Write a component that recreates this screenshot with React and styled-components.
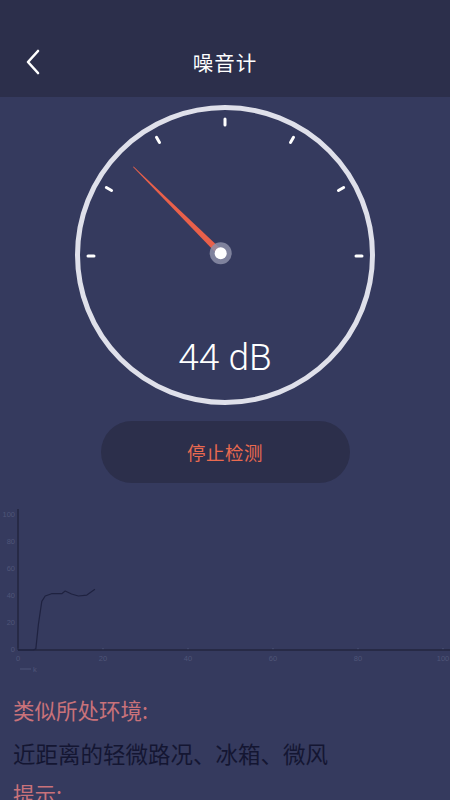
import styled, { createGlobalStyle } from "styled-components";

const GlobalStyle = createGlobalStyle`
  html, body {
    margin: 0;
    padding: 0;
    background: #353a5e;
  }
  body {
    font-family: "Noto Sans CJK SC", "Noto Sans", sans-serif;
  }
`;

const Screen = styled.div`
  width: 450px;
  height: 800px;
  overflow: hidden;
  background: #353a5e;
  display: flex;
  flex-direction: column;
`;

const Header = styled.header`
  height: 97px;
  flex-shrink: 0;
  background: #2c2f4b;
  display: grid;
  grid-template-columns: 60px 1fr 60px;
  align-items: end;
  padding-bottom: 20px;
  box-sizing: border-box;
`;

const BackButton = styled.div`
  display: flex;
  align-items: center;
  padding-left: 25px;
  height: 30px;
`;

const Title = styled.h1`
  margin: 0;
  text-align: center;
  font-size: 20.5px;
  font-weight: 400;
  color: #ffffff;
  line-height: 30px;
  letter-spacing: 1px;
`;

const GaugeWrap = styled.div`
  display: flex;
  justify-content: center;
  margin-top: 3px;
`;

const ButtonRow = styled.div`
  display: flex;
  justify-content: center;
  margin-top: 11px;
`;

const StopButton = styled.button`
  width: 249px;
  height: 62px;
  border: none;
  border-radius: 31px;
  background: #2c2f4b;
  color: #ea6a50;
  font-family: "Noto Sans CJK SC", sans-serif;
  font-size: 18.5px;
  letter-spacing: 0.5px;
  cursor: pointer;
`;

const ChartWrap = styled.div`
  margin-top: 18px;
  display: flex;
`;

const Info = styled.section`
  padding: 15px 13px 0;
  display: flex;
  flex-direction: column;
`;

const Label = styled.div`
  font-size: 21.5px;
  line-height: 28px;
  color: ${(p) => p.$color || "#c9727a"};
  margin-top: ${(p) => p.$gap || 0}px;
`;

const Desc = styled.div`
  font-size: 22.5px;
  line-height: 28px;
  color: #141632;
  margin-top: 15px;
  white-space: nowrap;
`;

const CX = 155;
const CY = 155;

function Gauge() {
  const ticks = [0, 30, 60, 90, 120, 150, 180].map((deg) => {
    const a = (deg * Math.PI) / 180;
    const c = Math.cos(a);
    const s = Math.sin(a);
    return {
      x1: CX + 131 * c,
      y1: CY + 1 - 131 * s,
      x2: CX + 137 * c,
      y2: CY + 1 - 137 * s,
    };
  });

  const hub = { x: 150.7, y: 153.3 };
  const tip = { x: 63.3, y: 66.7 };
  const dx = tip.x - hub.x;
  const dy = tip.y - hub.y;
  const len = Math.hypot(dx, dy);
  const px = -dy / len;
  const py = dx / len;
  const needle = [
    [hub.x + px * 3.2, hub.y + py * 3.2],
    [tip.x + px * 0.4, tip.y + py * 0.4],
    [tip.x - px * 0.4, tip.y - py * 0.4],
    [hub.x - px * 3.2, hub.y - py * 3.2],
  ]
    .map((p) => p.join(","))
    .join(" ");

  return (
    <svg width="310" height="310" viewBox="0 0 310 310">
      <circle cx={CX} cy={CY} r="147.5" fill="none" stroke="#dfe0ea" strokeWidth="5" />
      {ticks.map((t, i) => (
        <line
          key={i}
          {...t}
          stroke="#ffffff"
          strokeWidth="3"
          strokeLinecap="round"
        />
      ))}
      <polygon points={needle} fill="#e9604a" />
      <circle cx={hub.x} cy={hub.y} r="11" fill="#8c8fa8" opacity="0.85" />
      <circle cx={hub.x} cy={hub.y} r="6" fill="#ffffff" />
      <text
        x={CX}
        y="270"
        textAnchor="middle"
        fill="#ffffff"
        fontFamily="Roboto, 'Liberation Sans', sans-serif"
        fontWeight="300"
        fontSize="37"
      >
        44 dB
      </text>
    </svg>
  );
}

const data = [
  [0, 0], [3.6, 0], [4.2, 0.8], [4.8, 19], [5.6, 36], [6.4, 40],
  [7.9, 41.7], [10.3, 41.7], [11.1, 43.7], [12.6, 41.5], [14.2, 40],
  [16.2, 40.7], [18.1, 45],
];

function Chart() {
  const x0 = 18;
  const y0 = 149;
  const sx = 4.25;
  const sy = 1.35;
  const points = data.map(([x, y]) => `${x0 + x * sx},${y0 - y * sy}`).join(" ");
  const yLabels = [0, 20, 40, 60, 80, 100];
  const xLabels = [0, 20, 40, 60, 80, 100];
  return (
    <svg width="450" height="180" viewBox="0 0 450 180">
      <g fontFamily="'Liberation Sans', sans-serif" fontSize="7.5" fill="#4f5578">
        {yLabels.map((v) => (
          <text key={v} x={x0 - 3} y={y0 - v * sy + 2} textAnchor="end">
            {v}
          </text>
        ))}
        {xLabels.map((v) => (
          <text key={v} x={x0 + v * sx} y={y0 + 11} textAnchor="middle">
            {v}
          </text>
        ))}
        <text x="33" y="171">k</text>
      </g>
      {xLabels.map((v) => (
        <line key={v} x1={x0 + v * sx} y1={y0} x2={x0 + v * sx} y2={y0 - 2} stroke="#4f5578" strokeWidth="1" />
      ))}
      <line x1={x0} y1="8" x2={x0} y2={y0} stroke="#23263f" strokeWidth="1.5" />
      <line x1={x0} y1={y0} x2="450" y2={y0} stroke="#23263f" strokeWidth="1.5" />
      <polyline points={points} fill="none" stroke="#1f2240" strokeWidth="1.2" strokeLinejoin="round" />
      <line x1="20" y1="168" x2="31" y2="168" stroke="#4f5578" strokeWidth="1" />
    </svg>
  );
}

export default function App() {
  return (
    <>
      <GlobalStyle />
      <Screen>
        <Header>
          <BackButton>
            <svg width="16" height="26" viewBox="0 0 16 26">
              <polyline
                points="13,2 3,13 13,24"
                fill="none"
                stroke="#ffffff"
                strokeWidth="2.6"
                strokeLinecap="round"
                strokeLinejoin="round"
              />
            </svg>
          </BackButton>
          <Title>噪音计</Title>
          <div />
        </Header>
        <GaugeWrap>
          <Gauge />
        </GaugeWrap>
        <ButtonRow>
          <StopButton>停止检测</StopButton>
        </ButtonRow>
        <ChartWrap>
          <Chart />
        </ChartWrap>
        <Info>
          <Label>类似所处环境:</Label>
          <Desc>近距离的轻微路况、冰箱、微风</Desc>
          <Label $gap={13}>提示:</Label>
        </Info>
      </Screen>
    </>
  );
}
